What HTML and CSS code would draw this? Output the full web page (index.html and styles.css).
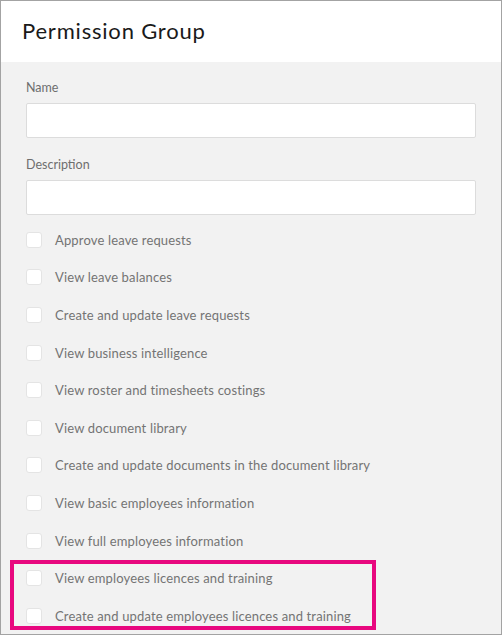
FILE: index.html
```html
<!doctype html>
<html lang="en">
<head>
    <meta charset="UTF-8">
    <title>Permission Group</title>
    <link rel="stylesheet" href="styles.css">
</head>
<body>
<div id="panel">
    <div class="header">
        <h1>Permission Group</h1>
    </div>
    <div class="form">
        <div class="field">
            <label>Name</label>
            <div class="input"></div>
        </div>
        <div class="field">
            <label>Description</label>
            <div class="input"></div>
        </div>
        <ul class="perms">
            <li><span class="box"></span>Approve leave requests</li>
            <li><span class="box"></span>View leave balances</li>
            <li><span class="box"></span>Create and update leave requests</li>
            <li><span class="box"></span>View business intelligence</li>
            <li><span class="box"></span>View roster and timesheets costings</li>
            <li><span class="box"></span>View document library</li>
            <li><span class="box"></span>Create and update documents in the document library</li>
            <li><span class="box"></span>View basic employees information</li>
            <li><span class="box"></span>View full employees information</li>
        </ul>
        <ul class="perms highlight">
            <li><span class="box"></span>View employees licences and training</li>
            <li><span class="box"></span>Create and update employees licences and training</li>
        </ul>
    </div>
</div>
</body>
</html>
```

FILE: styles.css
```css
*{
    padding: 0;
    margin: 0;
    box-sizing: border-box;
}
li{
    list-style: none;
}
body{
    font-family: Lato, "Liberation Sans", sans-serif;
    background: #fff;
}
#panel{
    width: 502px;
    height: 635px;
    border: 1px solid #a3a3a3;
    background: #f2f2f2;
    overflow: hidden;
}
.header{
    height: 61px;
    background: #fff;
    padding: 16px 0 0 21px;
}
.header h1{
    font-size: 22px;
    font-weight: 400;
    color: #1a1a1a;
    line-height: 28px;
    letter-spacing: 0.8px;
}
.form{
    padding: 18px 25px 0 25px;
}
.field label{
    display: block;
    font-size: 12.5px;
    line-height: 16px;
    color: #6e6e6e;
    margin-bottom: 7px;
}
.field .input{
    height: 35px;
    background: #fff;
    border: 1px solid #dcdcdc;
    border-radius: 2px;
    margin-bottom: 19px;
}
.field + .field .input{
    margin-bottom: 6px;
}
.perms li{
    height: 37.6px;
    display: flex;
    align-items: center;
    font-size: 13px;
    color: #747474;
    letter-spacing: 0.15px;
}
.perms .box{
    width: 16px;
    height: 16px;
    background: #fff;
    border: 1px solid #e4e4e4;
    border-radius: 3px;
    margin-right: 13px;
    flex-shrink: 0;
}
.highlight{
    position: relative;
}
.highlight::after{
    content: "";
    box-sizing: border-box;
    position: absolute;
    left: -16px;
    top: 1px;
    width: 366px;
    height: 70px;
    border: 4px solid #e8087f;
}
```
